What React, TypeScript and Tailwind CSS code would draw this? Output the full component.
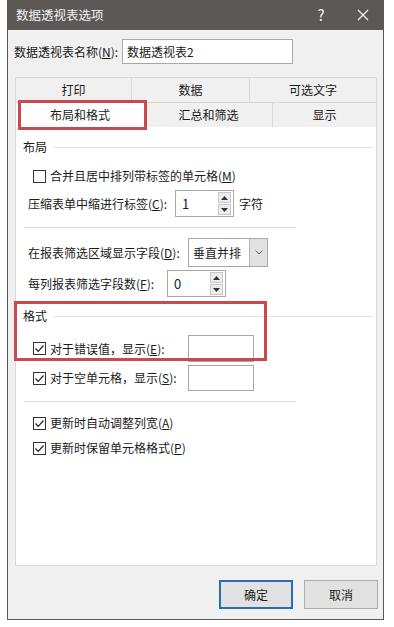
import React from 'react'

const font = { fontFamily: '"Noto Sans CJK SC", "Noto Sans", sans-serif' }

function Check({ checked }: { checked?: boolean }) {
  return (
    <span className="flex h-[13px] w-[13px] shrink-0 items-center justify-center border border-[#333] bg-white">
      {checked && (
        <svg width="11" height="11" viewBox="0 0 11 11">
          <path d="M1.5 5.5 L4.2 8.3 L9.5 2.5" fill="none" stroke="#222" strokeWidth="1.2" />
        </svg>
      )}
    </span>
  )
}

function Spin({ value, w }: { value: string; w: string }) {
  return (
    <div className={`flex h-[27px] shrink-0 items-stretch border border-[#a8a8a8] bg-white ${w}`}>
      <span className="flex-1 pl-[6px] text-[13px] leading-[25px]">{value}</span>
      <div className="my-[1px] mr-[2px] flex w-[13px] flex-col gap-[1px]">
        <div className="flex flex-1 items-center justify-center border border-[#c8c8c8] bg-[#ececec]">
          <svg width="7" height="4" viewBox="0 0 7 4"><path d="M0 4 L3.5 0 L7 4Z" fill="#333" /></svg>
        </div>
        <div className="flex flex-1 items-center justify-center border border-[#c8c8c8] bg-[#ececec]">
          <svg width="7" height="4" viewBox="0 0 7 4"><path d="M0 0 L3.5 4 L7 0Z" fill="#333" /></svg>
        </div>
      </div>
    </div>
  )
}

function Section({ title }: { title: string }) {
  return (
    <div className="flex h-[20px] items-center pl-[7px] pr-[4px]">
      <span>{title}</span>
      <div className="ml-[6px] h-px flex-1 bg-[#e3e3e3]" />
    </div>
  )
}

export default function App() {
  return (
    <div className="h-[627px] w-[394px] whitespace-nowrap bg-white text-[12px] text-[#1a1a1a]" style={font}>
      <div className="ml-[7px] flex h-[620px] w-[377px] flex-col border-x border-b border-[#5a5856] bg-[#f0f0f0]">
        {/* Title bar */}
        <div className="flex h-[30px] shrink-0 items-center bg-[#5b5856] pl-[8px] text-[12.5px] text-[#f2f2f2]">
          <span className="flex-1">数据透视表选项</span>
          <span className="w-[20px] text-center text-[15px]">?</span>
          <svg className="ml-[26px] mr-[14px]" width="12" height="12" viewBox="0 0 12 12">
            <path d="M1 1 L11 11 M11 1 L1 11" stroke="#f2f2f2" strokeWidth="1.3" />
          </svg>
        </div>

        {/* Name row */}
        <div className="mt-[9px] flex h-[25px] items-center pl-[6px]">
          <span className="w-[108px] shrink-0">
            数据透视表名称(<u>N</u>):
          </span>
          <div className="flex h-[25px] w-[171px] items-center border border-[#a8a8a8] bg-white pl-[4px]">数据透视表2</div>
        </div>

        {/* Tabs */}
        <div className="relative ml-[7px] mt-[13px] w-[362px]">
          <div className="flex h-[25px] border-l border-t border-[#d9d9d9]">
            <div className="flex w-[116px] items-center justify-center border-r border-[#d9d9d9]">打印</div>
            <div className="flex w-[118px] items-center justify-center border-r border-[#d9d9d9]">数据</div>
            <div className="flex flex-1 items-center justify-center border-r border-[#d9d9d9]">可选文字</div>
          </div>
          <div className="flex h-[25px] border-t border-[#d9d9d9]">
            <div className="flex w-[130px] items-center justify-center border-x border-[#d9d9d9] bg-white">布局和格式</div>
            <div className="flex w-[128px] items-center justify-center border-r border-[#d9d9d9]">汇总和筛选</div>
            <div className="flex flex-1 items-center justify-center border-r border-[#d9d9d9]">显示</div>
          </div>

          {/* Panel */}
          <div className="flex h-[439px] flex-col border border-t-0 border-[#d9d9d9] bg-white">
            <div className="mt-[10px]">
              <Section title="布局" />
            </div>
            <div className="mt-[9px] flex h-[20px] items-center gap-[4px] pl-[17px]">
              <Check />
              <span>
                合并且居中排列带标签的单元格(<u>M</u>)
              </span>
            </div>
            <div className="mt-[3px] flex h-[29px] items-center pl-[12px]">
              <span className="w-[147px] shrink-0">
                压缩表单中缩进行标签(<u>C</u>):
              </span>
              <Spin value="1" w="w-[59px]" />
              <span className="ml-[5px]">字符</span>
            </div>
            <div className="ml-[8px] mt-[9px] h-px w-[272px] bg-[#dcdcdc]" />
            <div className="mt-[10px] flex h-[29px] items-center pl-[12px]">
              <span className="w-[160px] shrink-0">
                在报表筛选区域显示字段(<u>D</u>):
              </span>
              <div className="flex h-[29px] w-[80px] shrink-0 items-stretch border border-[#a8a8a8] bg-white">
                <span className="flex-1 pl-[4px] leading-[27px]">垂直并排</span>
                <div className="flex w-[18px] items-center justify-center border-l border-[#b4b4b4] bg-[#e2e2e2]">
                  <svg width="8" height="5" viewBox="0 0 8 5"><path d="M0.5 0.5 L4 4 L7.5 0.5" fill="none" stroke="#666" strokeWidth="1" /></svg>
                </div>
              </div>
            </div>
            <div className="mt-[3px] flex h-[27px] items-center pl-[12px]">
              <span className="w-[139px] shrink-0">
                每列报表筛选字段数(<u>F</u>):
              </span>
              <Spin value="0" w="w-[59px]" />
            </div>

            <div className="mt-[9px]">
              <Section title="格式" />
            </div>
            <div className="mt-[9px] flex h-[27px] items-center pl-[17px]">
              <div className="flex w-[155px] shrink-0 items-center gap-[4px]">
                <Check checked />
                <span>
                  对于错误值，显示(<u>E</u>):
                </span>
              </div>
              <div className="h-[27px] w-[66px] border border-[#a8a8a8] bg-white" />
            </div>
            <div className="mt-[3px] flex h-[26px] items-center pl-[17px]">
              <div className="flex w-[155px] shrink-0 items-center gap-[4px]">
                <Check checked />
                <span>
                  对于空单元格，显示(<u>S</u>):
                </span>
              </div>
              <div className="h-[26px] w-[66px] border border-[#a8a8a8] bg-white" />
            </div>
            <div className="ml-[8px] mt-[10px] h-px w-[272px] bg-[#dcdcdc]" />
            <div className="mt-[11px] flex h-[20px] items-center gap-[4px] pl-[17px]">
              <Check checked />
              <span>
                更新时自动调整列宽(<u>A</u>)
              </span>
            </div>
            <div className="mt-[5px] flex h-[20px] items-center gap-[4px] pl-[17px]">
              <Check checked />
              <span>
                更新时保留单元格格式(<u>P</u>)
              </span>
            </div>
          </div>

          {/* Highlight boxes */}
          <div className="absolute left-[3px] top-[23px] h-[30px] w-[129px] border-[3px] border-[#c84a4c]" />
          <div className="absolute left-[-1px] top-[224px] h-[60px] w-[253px] border-[3px] border-[#c84a4c]" />
        </div>

        {/* Buttons */}
        <div className="mt-[14px] flex justify-end gap-[11px] pr-[5px]">
          <button className="flex h-[29px] w-[74px] items-center justify-center border-2 border-[#2a6db0] bg-[#e1e1e1]">确定</button>
          <button className="flex h-[29px] w-[74px] items-center justify-center border border-[#adadad] bg-[#e1e1e1]">取消</button>
        </div>
      </div>
    </div>
  )
}
